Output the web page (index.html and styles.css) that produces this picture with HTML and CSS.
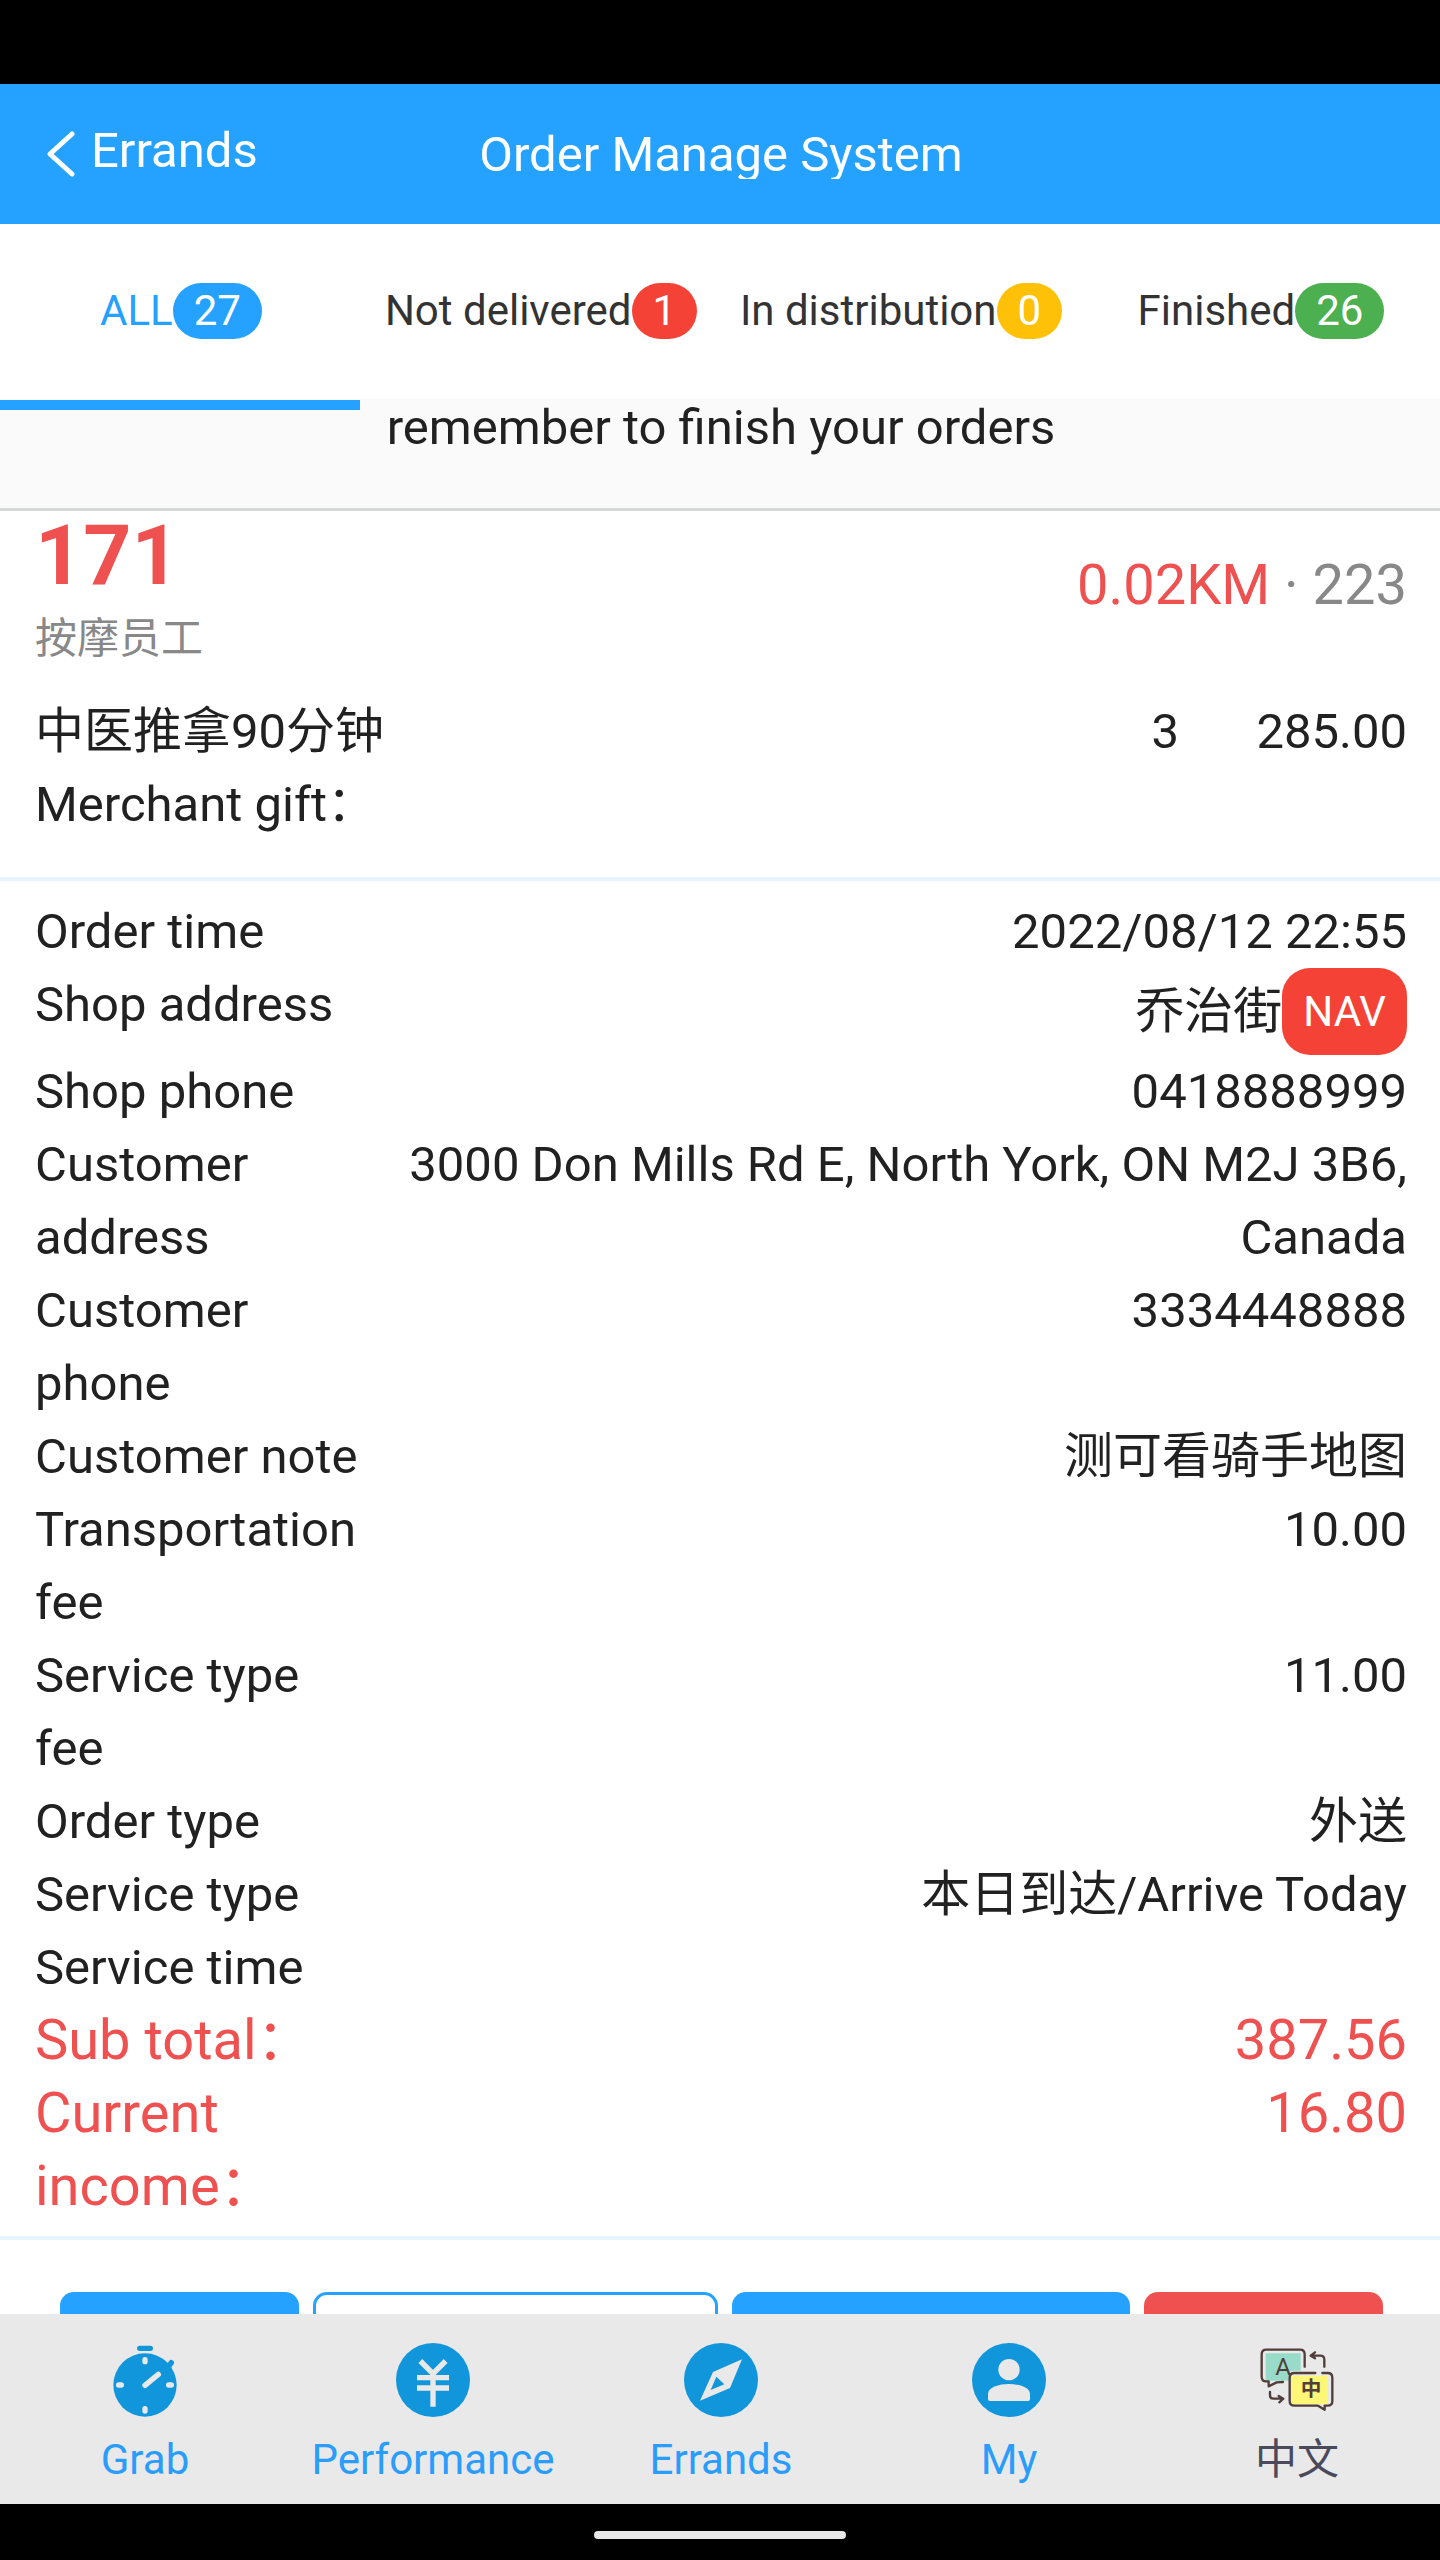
FILE: index.html
```html
<!DOCTYPE html>
<html lang="en">
<head>
<meta charset="utf-8">
<meta name="viewport" content="width=device-width, initial-scale=1">
<title>Order Manage System</title>
<link rel="stylesheet" href="styles.css">
</head>
<body>
<div class="app">
  <div class="status-bar"></div>
  <header class="header">
    <a class="back" href="#">
      <svg class="back-icon" viewBox="0 0 28 46" aria-hidden="true"><path d="M25 3 3 23l22 20"/></svg>
      <span class="back-label">Errands</span>
    </a>
    <h1 class="title">Order Manage System</h1>
  </header>
  <nav class="tabs">
    <a class="tab tab-active" href="#">ALL<span class="badge badge-blue">27</span></a>
    <a class="tab" href="#">Not delivered<span class="badge badge-red">1</span></a>
    <a class="tab" href="#">In distribution<span class="badge badge-amber">0</span></a>
    <a class="tab" href="#">Finished<span class="badge badge-green">26</span></a>
  </nav>
  <main class="content">
    <p class="notice">remember to finish your orders</p>
    <article>
      <section class="summary">
        <div class="summary-head">
          <div>
            <h2 class="order-no">171</h2>
            <p class="staff" lang="zh">按摩员工</p>
          </div>
          <p class="distance"><span class="red">0.02KM</span> · 223</p>
        </div>
        <div class="item">
          <span class="item-name">中医推拿90分钟</span>
          <span>3</span>
          <span class="item-price">285.00</span>
        </div>
        <p class="gift">Merchant gift：</p>
      </section>
      <dl class="details">
        <div class="row"><dt>Order time</dt><dd>2022/08/12 22:55</dd></div>
        <div class="row"><dt>Shop address</dt><dd class="with-nav">乔治街<button class="nav-button" type="button">NAV</button></dd></div>
        <div class="row"><dt>Shop phone</dt><dd>0418888999</dd></div>
        <div class="row"><dt>Customer address</dt><dd>3000 Don Mills Rd E, North York, ON M2J 3B6, Canada</dd></div>
        <div class="row"><dt>Customer phone</dt><dd>3334448888</dd></div>
        <div class="row"><dt>Customer note</dt><dd>测可看骑手地图</dd></div>
        <div class="row"><dt>Transportation fee</dt><dd>10.00</dd></div>
        <div class="row"><dt>Service type fee</dt><dd>11.00</dd></div>
        <div class="row"><dt>Order type</dt><dd>外送</dd></div>
        <div class="row"><dt>Service type</dt><dd>本日到达/Arrive Today</dd></div>
        <div class="row"><dt>Service time</dt><dd></dd></div>
        <div class="row row-total"><dt>Sub total：</dt><dd>387.56</dd></div>
        <div class="row row-total"><dt>Current income：</dt><dd>16.80</dd></div>
      </dl>
      <div class="actions">
        <button class="action" type="button"></button>
        <button class="action action-wide action-outline" type="button"></button>
        <button class="action action-wide" type="button"></button>
        <button class="action action-danger" type="button"></button>
      </div>
    </article>
  </main>
  <nav class="bottom-nav">
    <a class="nav-item" href="#">
      <svg class="nav-icon" viewBox="0 0 222 222" aria-hidden="true">
        <circle cx="111" cy="126" r="95" fill="#1296db"/>
        <path d="M95 16h32M180 73l10-14" fill="none" stroke="#1296db" stroke-width="16" stroke-linecap="round"/>
        <path d="M111 50v6M111 197v7M32 126h8M182 126h8M111 127l40-33" fill="none" stroke="#e9e9e9" stroke-width="16" stroke-linecap="round"/>
      </svg>
      <span>Grab</span>
    </a>
    <a class="nav-item" href="#">
      <svg class="nav-icon" viewBox="0 0 222 222" aria-hidden="true">
        <circle cx="111" cy="111" r="111" fill="#1296db"/>
        <path d="M73 54l38 38 38-38M111 88v103M63 104h96M63 135h96" fill="none" stroke="#e9e9e9" stroke-width="16"/>
      </svg>
      <span>Performance</span>
    </a>
    <a class="nav-item" href="#">
      <svg class="nav-icon" viewBox="0 0 222 222" aria-hidden="true">
        <circle cx="111" cy="111" r="111" fill="#1296db"/>
        <path d="M174 49 87 87 48 173l90-38zM97 101l24 23-41 17z" fill="#e9e9e9" fill-rule="evenodd"/>
      </svg>
      <span>Errands</span>
    </a>
    <a class="nav-item" href="#">
      <svg class="nav-icon" viewBox="0 0 222 222" aria-hidden="true">
        <circle cx="111" cy="111" r="111" fill="#1296db"/>
        <circle cx="111" cy="80" r="32" fill="#e9e9e9"/>
        <path d="M48 168v-15c0-20 32-30 63-30s63 10 63 30v15q0 6-6 6H54q-6 0-6-6z" fill="#e9e9e9"/>
      </svg>
      <span>My</span>
    </a>
    <a class="nav-item nav-item-lang" href="#" lang="zh">
      <svg class="nav-icon" viewBox="0 0 222 222" aria-hidden="true">
        <path d="M17 31h105v52H98q-10 0-10 10v20H17z" fill="#98dbc9"/>
        <path d="M96 98h108v86H96z" fill="#fdf676"/>
        <g fill="none" stroke="#513e3b" stroke-width="7" stroke-linecap="round" stroke-linejoin="round">
          <path d="M134 71V34q0-14-14-14H19Q5 20 5 34v67q0 14 14 14h7v15l24-12 19-1"/>
          <path d="M166 90h-63q-14 0-14 14v70q0 14 14 14h71l20 12v-12h9q14 0 14-14v-70q0-14-14-14h-16"/>
          <path d="M193 71V50q0-12-12-12h-27M165 28l-13 10 13 8"/>
          <path d="M30 147v10q0 10 10 10h29M56 159l14 8-12 11"/>
        </g>
        <text x="69" y="96" font-size="72" text-anchor="middle" fill="#513e3b">A</text>
        <text x="153" y="160" font-size="62" font-weight="bold" text-anchor="middle" fill="#513e3b">中</text>
      </svg>
      <span>中文</span>
    </a>
  </nav>
  <div class="gesture-bar"><div class="gesture-pill"></div></div>
</div>
</body>
</html>
```

FILE: styles.css
```css
* {
  box-sizing: border-box;
  margin: 0;
  padding: 0;
}

body {
  font-family: Roboto, "Noto Sans CJK SC", sans-serif;
  font-size: 49px;
  line-height: 73px;
  color: #212121;
  background: #fff;
}

a {
  color: inherit;
  text-decoration: none;
}

button {
  font: inherit;
  border: 0;
}

.app {
  display: flex;
  flex-direction: column;
  height: 100vh;
}

.status-bar {
  flex: none;
  height: 84px;
  background: #000;
}

/* Header */
.header {
  flex: none;
  display: grid;
  grid-template-columns: 1fr auto 1fr;
  align-items: center;
  height: 140px;
  padding: 0 45px 0 47px;
  color: #fff;
  background: #25a2ff;
}

.back {
  display: flex;
  align-items: center;
  gap: 16px;
}

.back-icon {
  width: 28px;
  height: 46px;
  fill: none;
  stroke: #fff;
  stroke-width: 5;
  stroke-linecap: round;
  stroke-linejoin: round;
}

.back-label {
  padding-bottom: 8px;
}

.title {
  font-size: 49px;
  font-weight: 400;
  line-height: 49px;
  overflow: hidden;
}

/* Tabs */
.tabs {
  flex: none;
  display: flex;
  height: 175px;
}

.tab {
  position: relative;
  flex: 1;
  display: flex;
  align-items: center;
  justify-content: center;
  padding: 0 0 2px 2px;
  font-size: 42px;
  line-height: 56px;
  color: #333;
  white-space: nowrap;
}

.tab-active {
  color: #25a2ff;
}

.tab-active::after {
  content: "";
  position: absolute;
  left: 0;
  right: 0;
  bottom: -11px;
  height: 10px;
  background: #25a2ff;
}

.badge {
  padding: 0 21px;
  border-radius: 28px;
  color: #fff;
}

.badge-blue { background: #25a2ff; }
.badge-red { background: #f44336; }
.badge-amber { background: #ffc107; }
.badge-green { background: #4caf50; }

/* Order */
.content {
  flex: 1;
  min-height: 0;
  overflow: hidden;
}

.notice {
  padding: 1px 0 52px 2px;
  border-bottom: 3px solid #d6d8d8;
  line-height: 56px;
  text-align: center;
  background: #fafafa;
}

.summary {
  padding: 0 33px 36px 35px;
  border-bottom: 4px solid #e7f4fb;
}

.summary-head {
  display: flex;
  align-items: center;
  justify-content: space-between;
  margin-bottom: 36px;
}

.order-no {
  font-size: 84px;
  line-height: 90px;
  color: #ef5050;
}

.staff {
  margin-top: 18px;
  font-size: 42px;
  line-height: 40px;
  color: #888;
}

.distance {
  font-size: 56px;
  color: #888;
}

.red {
  color: #ef5050;
}

.item {
  display: flex;
}

.item-name {
  flex: 1;
}

.item-price {
  min-width: 228px;
  text-align: right;
}

.details {
  padding: 14px 33px 13px 35px;
  border-bottom: 4px solid #e7f4fb;
}

.row {
  display: grid;
  grid-template-columns: 1fr 3fr;
}

.row dd {
  text-align: right;
}

.row .with-nav {
  display: flex;
  align-items: center;
  justify-content: flex-end;
}

.nav-button {
  padding: 0 21px;
  border-radius: 28px;
  font-size: 42px;
  line-height: 87px;
  color: #fff;
  background: #f44336;
}

.row-total {
  font-size: 56px;
  color: #ef5050;
}

.actions {
  display: flex;
  gap: 14px;
  padding: 52px 57px 52px 60px;
}

.action {
  flex: 3;
  height: 112px;
  border-radius: 14px;
  background: #25a2ff;
}

.action-wide {
  flex: 5;
}

.action-outline {
  border: 3px solid #25a2ff;
  background: #fff;
}

.action-danger {
  background: #ef5050;
}

/* Bottom navigation */
.bottom-nav {
  flex: none;
  display: grid;
  grid-template-columns: repeat(5, 1fr);
  height: 190px;
  background: #e9e9e9;
}

.nav-item {
  display: flex;
  flex-direction: column;
  align-items: center;
  gap: 15px;
  padding: 29px 0 0 2px;
  font-size: 42px;
  line-height: 56px;
  color: #2a9dfb;
}

.nav-item-lang {
  color: #4a4a5c;
}

.nav-icon {
  width: 74px;
  height: 74px;
}

.gesture-bar {
  flex: none;
  display: flex;
  align-items: center;
  justify-content: center;
  height: 56px;
  padding-top: 6px;
  background: #000;
}

.gesture-pill {
  width: 252px;
  height: 8px;
  border-radius: 4px;
  background: #e9e9e9;
}
```
